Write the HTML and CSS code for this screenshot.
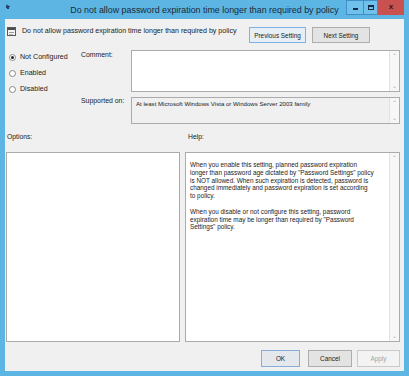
FILE: index.html
```html
<!DOCTYPE html>
<html lang="en">
<head>
<meta charset="utf-8">
<title>Policy setting</title>
<link rel="stylesheet" href="styles.css">
</head>
<body>
<div class="window">
  <div class="titlebar">
    <div class="tb-left">
      <svg class="app-icon" width="6" height="6" viewBox="0 0 6 6"><path d="M1 1h2v1h2v1H4v2H2V4H1z" fill="#23406a"/><circle cx="2.5" cy="1.5" r="1" fill="#3b5f92"/></svg>
    </div>
    <div class="title">Do not allow password expiration time longer than required by policy</div>
    <div class="tb-right">
      <div class="cap-btn cap-min"><span class="min-glyph"></span></div>
      <div class="cap-btn cap-max"><span class="max-glyph"></span></div>
      <div class="cap-close">x</div>
    </div>
  </div>
  <div class="client">
    <div class="hdr">
      <div class="hdr-name">
        <svg class="pol-icon" width="9" height="9" viewBox="0 0 9 9">
          <rect x="0.5" y="0.5" width="8" height="8" fill="#f4f4f4" stroke="#5a5a5a"/>
          <rect x="1" y="1" width="7" height="2" fill="#4d4d4d"/>
          <rect x="2" y="5" width="5" height="1" fill="#9a9a9a"/>
          <rect x="2" y="7" width="4" height="1" fill="#b5b5b5"/>
        </svg>
        <span>Do not allow password expiration time longer than required by policy</span>
      </div>
      <div class="hdr-btns">
        <div class="btn btn-focus w-prev">Previous Setting</div>
        <div class="btn w-next">Next Setting</div>
      </div>
    </div>
    <div class="mid">
      <div class="radios">
        <div class="radio"><span class="dot on"></span>Not Configured</div>
        <div class="radio"><span class="dot"></span>Enabled</div>
        <div class="radio"><span class="dot"></span>Disabled</div>
      </div>
      <div class="lbl lbl-comment">Comment:</div>
      <div class="box comment">
        <div class="box-body"></div>
        <div class="sbar"><span class="arr">&#8963;</span><span class="arr">&#8964;</span></div>
      </div>
      <div class="lbl lbl-sup">Supported on:</div>
      <div class="box sup">
        <div class="box-body sup-text">At least Microsoft Windows Vista or Windows Server 2003 family</div>
        <div class="sbar"><span class="arr">&#8963;</span><span class="arr">&#8964;</span></div>
      </div>
    </div>
    <div class="sect-labels">
      <div class="opt-lbl">Options:</div>
      <div class="help-lbl">Help:</div>
    </div>
    <div class="panes">
      <div class="box options"></div>
      <div class="box help">
        <div class="box-body help-text">
          <p>When you enable this setting, planned password expiration<br>longer than password age dictated by "Password Settings" policy<br>is NOT allowed. When such expiration is detected, password is<br>changed immediately and password expiration is set according<br>to policy.</p>
          <p>When you disable or not configure this setting, password<br>expiration time may be longer than required by "Password<br>Settings" policy.</p>
        </div>
        <div class="sbar"><span class="arr">&#8963;</span><span class="arr">&#8964;</span></div>
      </div>
    </div>
    <div class="footer">
      <div class="btn btn-default w-ok">OK</div>
      <div class="btn w-cancel">Cancel</div>
      <div class="btn btn-disabled w-apply">Apply</div>
    </div>
  </div>
</div>
</body>
</html>
```
FILE: styles.css
```css
* { box-sizing: border-box; }
html, body { margin: 0; padding: 0; }
body {
  width: 409px;
  height: 376px;
  overflow: hidden;
  font-family: "Liberation Sans", Arial, sans-serif;
  font-size: 6.5px;
  color: #1b1b1b;
  background: #5db5e3;
}
.window {
  width: 409px;
  height: 376px;
  display: flex;
  flex-direction: column;
  background: #5db5e3;
}
.titlebar {
  height: 19px;
  display: grid;
  grid-template-columns: 1fr auto 1fr;
  align-items: start;
}
.tb-left { padding: 4px 0 0 5px; }
.app-icon { display: block; }
.title {
  font-size: 8.9px;
  line-height: 20px;
  height: 19px;
  color: #1a2a3a;
  white-space: nowrap;
}
.tb-right {
  justify-self: end;
  display: flex;
  padding-right: 5px;
}
.cap-btn {
  height: 15px;
  border: 1px solid #3f8fc6;
  background: #6fc0ea;
  display: flex;
  align-items: center;
  justify-content: center;
}
.cap-min { width: 17px; border-right: 0; }
.cap-max { width: 15px; }
.min-glyph {
  width: 5px;
  height: 2px;
  background: #152a44;
  margin-top: 3px;
}
.max-glyph {
  width: 6px;
  height: 5px;
  border: 1px solid #152a44;
  border-top-width: 2px;
}
.cap-close {
  width: 26px;
  height: 15px;
  background: #c9514f;
  color: #3a1414;
  font-weight: bold;
  font-size: 8px;
  line-height: 14px;
  text-align: center;
}
.client {
  flex: 1;
  margin: 0 5px 5px 5px;
  background: #f0f0f0;
  padding: 8px 4px 4px 1px;
  display: flex;
  flex-direction: column;
}
.hdr {
  display: flex;
  height: 16px;
}
.hdr-name {
  display: flex;
  align-items: flex-start;
  gap: 6px;
  padding-left: 1px;
  white-space: nowrap;
  line-height: 8px;
  font-size: 7.1px;
}
.pol-icon { display: block; margin-top: 0; }
.hdr-btns {
  margin-left: auto;
  margin-right: 30px;
  display: flex;
  gap: 6px;
}
.btn {
  height: 16px;
  border: 1px solid #adadad;
  background: #e3e3e3;
  display: flex;
  align-items: center;
  justify-content: center;
  white-space: nowrap;
  font-size: 6.4px;
}
.btn-focus { border-color: #7fb2e0; background: #e6eef6; }
.btn-default { border-color: #86aed8; background: #e4e8ed; }
.btn-disabled { color: #a3a3a3; border-color: #cacaca; background: #f3f3f3; }
.w-prev { width: 57px; }
.w-next { width: 58px; }
.w-ok { width: 39px; }
.w-cancel { width: 44px; }
.w-apply { width: 43px; }
.mid {
  margin-top: 7px;
  display: grid;
  grid-template-columns: 75px 50px 269px;
  grid-template-rows: 42px 27px;
  row-gap: 5px;
}
.radios {
  grid-row: 1 / 3;
  grid-column: 1;
  padding-left: 3px;
  margin-top: -1px;
  font-size: 7.1px;
}
.radio {
  display: flex;
  align-items: center;
  height: 16px;
  gap: 4px;
  white-space: nowrap;
}
.dot {
  width: 7px;
  height: 7px;
  border-radius: 50%;
  border: 1px solid #8a8a8a;
  background: #fff;
  position: relative;
}
.dot.on::after {
  content: "";
  position: absolute;
  left: 1px;
  top: 1px;
  width: 3px;
  height: 3px;
  border-radius: 50%;
  background: #222;
}
.lbl { white-space: nowrap; font-size: 6.9px; }
.lbl-comment { grid-column: 2; grid-row: 1; line-height: 10px; }
.lbl-sup { grid-column: 2; grid-row: 2; line-height: 8px; }
.box {
  border: 1px solid #ababab;
  background: #fff;
  display: flex;
}
.comment { grid-column: 3; grid-row: 1; }
.sup { grid-column: 3; grid-row: 2; background: #f0f0f0; }
.box-body { flex: 1; }
.sup-text { padding: 2px 0 0 4px; line-height: 8px; white-space: nowrap; font-size: 6.1px; }
.sbar {
  width: 10px;
  border-left: 1px solid #e2e2e2;
  background: #f7f7f7;
  display: flex;
  flex-direction: column;
  justify-content: space-between;
  align-items: center;
  padding: 1px 0;
}
.arr {
  font-family: "DejaVu Sans", sans-serif;
  font-size: 6px;
  line-height: 8px;
  color: #a9a9a9;
}
.sect-labels {
  margin-top: 9px;
  height: 8px;
  line-height: 8px;
  display: flex;
  font-size: 6.8px;
}
.opt-lbl { width: 181px; padding-left: 1px; }
.help-lbl { padding-left: 1px; }
.panes {
  margin-top: 11px;
  height: 190px;
  display: flex;
  gap: 5px;
}
.options { width: 174px; }
.help { flex: 1; }
.help-text {
  padding: 8px 0 0 4px;
  line-height: 7.8px;
  white-space: nowrap;
  font-size: 6.4px;
}
.help-text p { margin: 0 0 7.8px 0; }
.footer {
  margin-top: 8px;
  display: flex;
  justify-content: flex-end;
}
.footer .btn { height: 17px; }
.w-ok { margin-right: 8px; }
.w-cancel { margin-right: 5px; }
```
